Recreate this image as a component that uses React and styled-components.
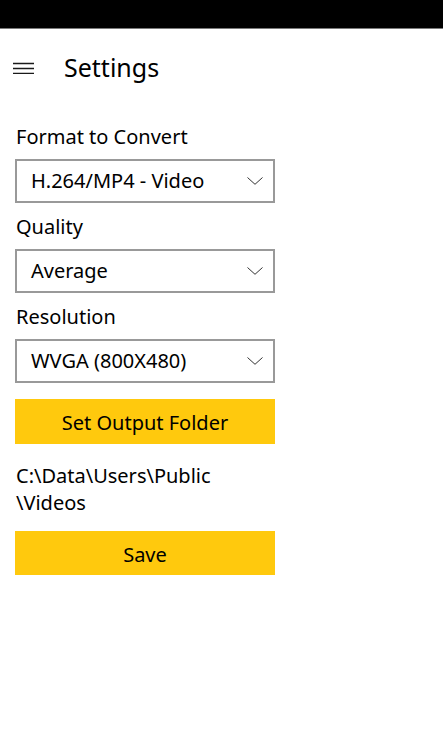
import React from "react";
import styled, { createGlobalStyle } from "styled-components";

const GlobalStyle = createGlobalStyle`
  html, body { margin: 0; padding: 0; background: #ffffff; }
  body { font-family: "Noto Sans", "Open Sans", sans-serif; color: #000; }
`;

const Page = styled.div`
  width: 443px;
  height: 738px;
  background: #ffffff;
  display: flex;
  flex-direction: column;
  overflow: hidden;
`;

const StatusBar = styled.div`
  height: 28px;
  background: #000;
  border-bottom: 1px solid #7a7a7a;
  flex-shrink: 0;
`;

const Header = styled.header`
  height: 78px;
  display: flex;
  align-items: center;
  padding-left: 13px;
  gap: 30px;
`;

const Title = styled.h1`
  margin: 0;
  font-size: 25px;
  font-weight: 400;
  line-height: 36px;
  color: #000;
  padding-bottom: 2px;
`;

const Form = styled.main`
  display: flex;
  flex-direction: column;
  gap: 10px;
  padding: 16px 15px 0 15px;
  width: 260px;
`;

const Field = styled.div`
  display: flex;
  flex-direction: column;
  gap: 10px;
`;

const Label = styled.div`
  font-size: 20px;
  line-height: 24px;
  padding: 2px 0 0 1px;
`;

const Select = styled.div`
  box-sizing: border-box;
  height: 44px;
  border: 2px solid #999999;
  display: flex;
  align-items: center;
  justify-content: space-between;
  padding: 0 10px 0 14px;
`;

const SelectText = styled.span`
  font-size: 20px;
  line-height: 24px;
`;

const Button = styled.button`
  box-sizing: border-box;
  height: ${(p) => p.$h || 44}px;
  margin-top: ${(p) => p.$mt || 0}px;
  border: none;
  background: #ffc90d;
  font-family: inherit;
  font-size: 20px;
  line-height: 24px;
  color: #000;
  padding: 3px 0 0 0;
  width: 100%;
`;

const Path = styled.div`
  margin-top: 8px;
  font-size: 20px;
  line-height: 27px;
  padding-left: 1px;
`;

const Hamburger = () => (
  <svg width="21" height="12" viewBox="0 0 21 12" aria-hidden="true">
    <path d="M0 1.5H21M0 6.5H21M0 11.5H21" stroke="#1a1a1a" strokeWidth="1.3" fill="none" />
  </svg>
);

const Chevron = () => (
  <svg width="16" height="8" viewBox="0 0 16 8" aria-hidden="true">
    <polyline points="0.5,0.5 8,7.3 15.5,0.5" stroke="#333" strokeWidth="1" fill="none" />
  </svg>
);

const Dropdown = ({ label, value }) => (
  <Field>
    <Label>{label}</Label>
    <Select>
      <SelectText>{value}</SelectText>
      <Chevron />
    </Select>
  </Field>
);

export default function App() {
  return (
    <>
      <GlobalStyle />
      <Page>
        <StatusBar />
        <Header>
          <Hamburger />
          <Title>Settings</Title>
        </Header>
        <Form>
          <Dropdown label="Format to Convert" value="H.264/MP4 - Video" />
          <Dropdown label="Quality" value="Average" />
          <Dropdown label="Resolution" value="WVGA (800X480)" />
          <Button $h={45} $mt={6}>Set Output Folder</Button>
          <Path>
            C:\Data\Users\Public
            <br />
            \Videos
          </Path>
          <Button $h={44} $mt={5}>Save</Button>
        </Form>
      </Page>
    </>
  );
}
